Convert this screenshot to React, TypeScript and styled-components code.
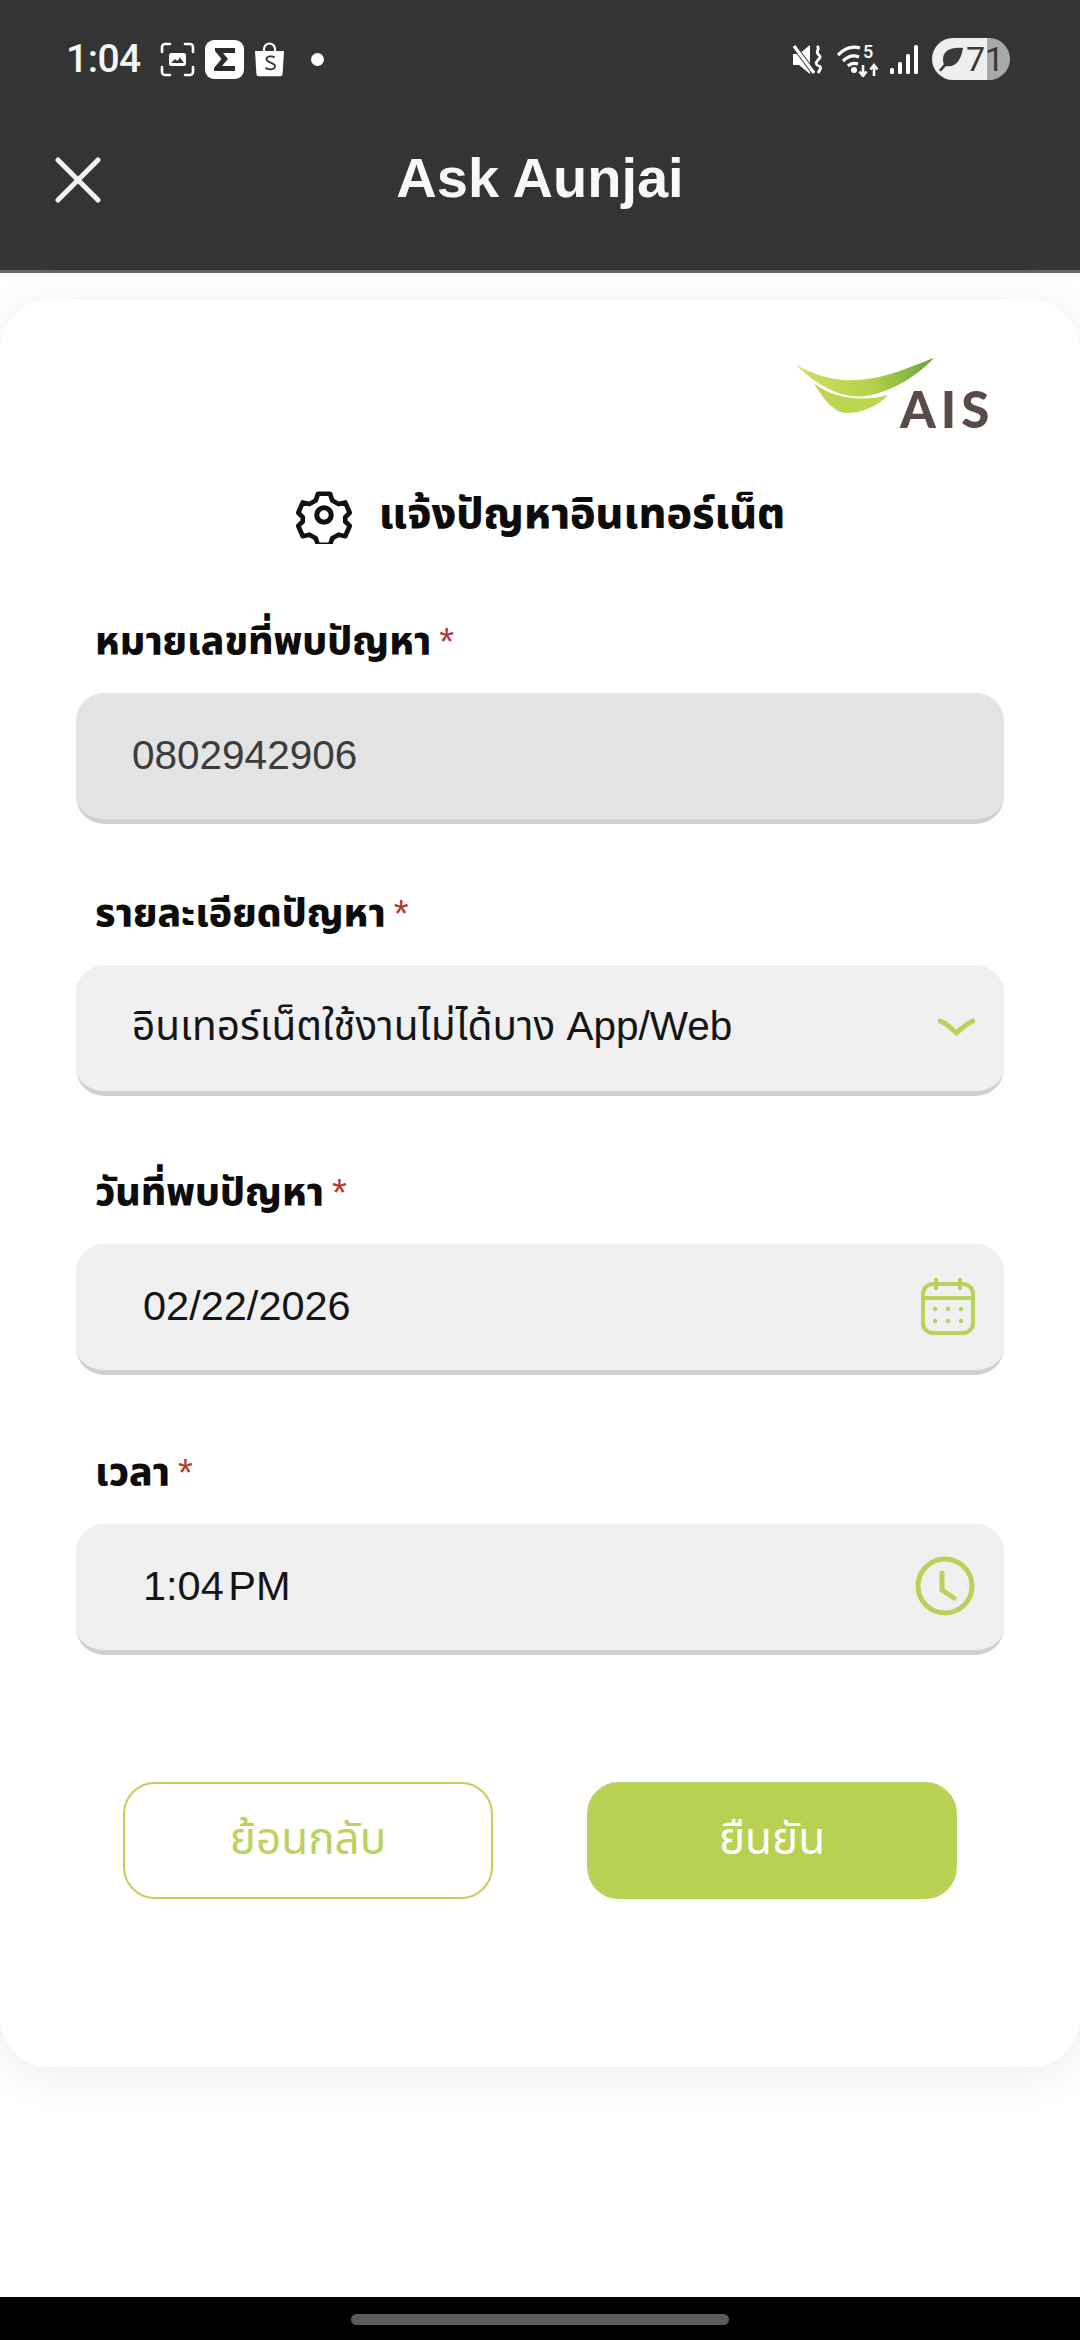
import React from "react";
import styled, { createGlobalStyle } from "styled-components";

const Global = createGlobalStyle`
  html, body { margin: 0; padding: 0; background: #fff; }
  * { box-sizing: border-box; }
  body { font-family: "Liberation Sans", "Noto Sans Thai", "Noto Sans", sans-serif; }
`;

const Page = styled.div`
  width: 1080px;
  height: 2340px;
  display: flex;
  flex-direction: column;
  overflow: hidden;
  background: #fff;
`;
const Header = styled.header`
  height: 273px;
  flex: none;
  background: #343434;
  border-bottom: 3px solid #666;
  color: #fff;
`;
const StatusBar = styled.div`
  height: 118px;
  display: flex;
  align-items: center;
  padding: 0 70px 0 66px;
`;
const Clock = styled.span`
  font: 500 39px/1 Roboto, sans-serif;
  letter-spacing: -0.5px;
  color: #f6f6f6;
  margin-right: 9px;
`;
const StatusLeft = styled.div`
  display: flex;
  align-items: center;
  gap: 10px;
`;
const StatusRight = styled.div`
  margin-left: auto;
  display: flex;
  align-items: center;
  gap: 14px;
`;
const Dot = styled.i`
  width: 13px;
  height: 13px;
  border-radius: 50%;
  background: #fff;
  margin-left: 16px;
`;
const Battery = styled.div`
  width: 78px;
  height: 42px;
  border-radius: 21px;
  background: linear-gradient(to right, #efefef 70%, #a9a9a9 70%);
  display: flex;
  align-items: center;
  padding-left: 6px;
  gap: 2px;
  color: #3a3a3a;
  font: 400 34px/1 Roboto, sans-serif;
`;
const TitleRow = styled.div`
  height: 116px;
  position: relative;
  display: flex;
  align-items: center;
  justify-content: center;
`;
const Title = styled.h1`
  margin: 0 0 -4px;
  font: 700 56px/1 "Liberation Sans", sans-serif;
  color: #f8f8f8;
`;
const Close = styled.button`
  position: absolute;
  left: 55px;
  top: 39px;
  width: 46px;
  height: 46px;
  padding: 0;
  border: 0;
  background: none;
  display: block;
`;
const Body = styled.main`
  flex: 1;
  padding-top: 27px;
  min-height: 0;
`;
const Card = styled.section`
  height: 1767px;
  background: #fff;
  border-radius: 50px;
  box-shadow: 0 8px 50px rgba(0, 0, 0, 0.08);
  padding: 54px 76px 0;
`;
const LogoRow = styled.div`
  display: flex;
  justify-content: flex-end;
  padding-right: 6px;
  height: 78px;
`;
const Heading = styled.div`
  margin-top: 53px;
  height: 60px;
  display: flex;
  align-items: center;
  justify-content: center;
  gap: 26px;
  color: #0c0c0c;
  font-size: 42.7px;
  font-weight: 800;
`;
const Form = styled.div`
  margin-top: 67px;
  display: flex;
  flex-direction: column;
`;
const Group = styled.div<{ $after?: number }>`
  margin-bottom: ${(p) => p.$after ?? 0}px;
`;
const Label = styled.div`
  height: 60px;
  padding-left: 19px;
  margin-bottom: 21px;
  display: flex;
  align-items: center;
  gap: 8px;
  font-size: 39px;
  font-weight: 800;
  color: #0c0c0c;
`;
const Star = styled.span`
  color: #b13a2c;
  font-weight: 400;
  font-size: 38px;
`;
const Field = styled.div<{ $disabled?: boolean; $inset?: number; $size?: number }>`
  height: 131px;
  border-radius: 28px;
  background: ${(p) => (p.$disabled ? "#e4e4e4" : "#f0f0f1")};
  border-bottom: 5px solid #d0d0d0;
  display: flex;
  align-items: center;
  justify-content: space-between;
  padding: 0 29px 2px ${(p) => p.$inset ?? 56}px;
  font-size: ${(p) => p.$size ?? 40.5}px;
  color: ${(p) => (p.$disabled ? "#3c3c3c" : "#151515")};
`;
const TimeText = styled.span`
  word-spacing: -7px;
`;
const Actions = styled.div`
  margin-top: 127px;
  padding: 0 47px;
  display: flex;
  justify-content: space-between;
`;
const Btn = styled.button<{ $primary?: boolean }>`
  width: 370px;
  height: 117px;
  border-radius: 32px;
  border: 2px solid #bad25e;
  background: ${(p) => (p.$primary ? "#b8d153" : "#fff")};
  color: ${(p) => (p.$primary ? "#fff" : "#bad25e")};
  font-family: inherit;
  font-size: 44px;
`;
const NavBar = styled.footer`
  height: 43px;
  flex: none;
  background: #000;
  display: flex;
  justify-content: center;
  padding-top: 17px;
`;
const Pill = styled.i`
  width: 378px;
  height: 11px;
  border-radius: 6px;
  background: #5c5c5c;
`;

const green = "#b9d25a";

const App = () => (
  <Page>
    <Global />
    <Header>
      <StatusBar>
        <StatusLeft>
          <Clock>1:04</Clock>
          <svg width="35" height="35" viewBox="0 0 35 35" fill="none">
            <path d="M2 10V5a3 3 0 0 1 3-3h5M25 2h5a3 3 0 0 1 3 3v5M33 25v5a3 3 0 0 1-3 3h-5M10 33H5a3 3 0 0 1-3-3v-5" stroke="#fff" strokeWidth="2.6" strokeLinecap="round" />
            <rect x="9" y="11" width="17" height="13" rx="2.5" fill="#fff" />
            <path d="M11 21l4-4 2.5 2 2.5-3.5 4 5.5z" fill="#343434" />
          </svg>
          <svg width="39" height="39" viewBox="0 0 39 39">
            <rect width="39" height="39" rx="9" fill="#fff" />
            <path d="M10 8h20v5H18l5 6-6 7h13v5H9v-3l7.5-9L10 11z" fill="#2c2c2c" />
          </svg>
          <svg width="31" height="35" viewBox="0 0 31 35" fill="none">
            <path d="M10 9V7a5.5 5.5 0 0 1 11 0v2" stroke="#fff" strokeWidth="2.2" />
            <path d="M1 9h29l-1.4 23a2.5 2.5 0 0 1-2.5 2.3H4.900a2.5 2.5 0 0 1-2.5-2.3z" fill="#fff" />
            <path d="M20.5 15.5c-1.5-1.5-8-2.2-8 1.8 0 3.800 8.500 2.800 8.500 7 0 4-7 3.700-9.500 1.500" stroke="#343434" strokeWidth="1.8" />
          </svg>
          <Dot />
        </StatusLeft>
        <StatusRight>
          <svg width="31" height="31" viewBox="0 0 31 31" fill="none">
            <path d="M1 10h6l11-9v29L7 21H1z" fill="#fff" />
            <path d="M2 2l20 27" stroke="#343434" strokeWidth="5" />
            <path d="M2 2l20 27" stroke="#fff" strokeWidth="3.200" />
            <path d="M25 2c4 3-2 5 1 8s3 3 0 6-2 5 1 6 1 4-1 7" stroke="#fff" strokeWidth="2.800" />
          </svg>
          <svg width="45" height="36" viewBox="0 0 45 36" fill="none">
            <path d="M1 14c7-7 15-9 22-7M6 20c5-5 11-6 16-4M11 25c3-3 7-3 10-2" stroke="#fff" strokeWidth="3.200" />
            <circle cx="17" cy="29" r="3" fill="#fff" />
            <path d="M26 35V24m-3.500 6.500L26 35l3.500-4.500M37 35V24m-3.500 4.500L37 24l3.500 4.500" stroke="#fff" strokeWidth="2.600" />
            <text x="26" y="17" fontFamily="Roboto, sans-serif" fontWeight="500" fontSize="18" fill="#fff">5</text>
          </svg>
          <svg width="28" height="31" viewBox="0 0 28 31" style={{ marginLeft: -6 }}>
            <rect x="0" y="24" width="4" height="6" rx="1.500" fill="#fff" />
            <rect x="8" y="18" width="4" height="12" rx="1.500" fill="#fff" />
            <rect x="16" y="10" width="4" height="20" rx="1.500" fill="#fff" />
            <rect x="24" y="1" width="4" height="29" rx="1.500" fill="#fff" />
          </svg>
          <Battery>
            <svg width="26" height="26" viewBox="0 0 26 26">
              <path d="M25 2C12 1 5 5 5 14c0 2 .5 3 1 4L1 24l2 1.500L8 20c9 2 15-5 17-18z" fill="#3a3a3a" />
            </svg>
            71
          </Battery>
        </StatusRight>
      </StatusBar>
      <TitleRow>
        <Close aria-label="close">
          <svg width="46" height="46" viewBox="0 0 46 46">
            <path d="M3 3l40 40M43 3L3 43" stroke="#f2f2f2" strokeWidth="5" strokeLinecap="round" />
          </svg>
        </Close>
        <Title>Ask Aunjai</Title>
      </TitleRow>
    </Header>
    <Body>
      <Card>
        <LogoRow>
          <svg width="202" height="90" viewBox="0 0 202 90">
            <defs>
              <linearGradient id="sw" x1="0" x2="1" y1="0" y2="0">
                <stop offset="0" stopColor="#cfe064" />
                <stop offset="0.55" stopColor="#b5d14a" />
                <stop offset="1" stopColor="#6aa63c" />
              </linearGradient>
            </defs>
            <path d="M0 11C20 22 40 27 60 26C90 25 115 12 138 4C125 18 100 37 70 42C45 45 22 32 0 11Z" fill="url(#sw)" />
            <path d="M18 29C30 40 60 50 92 41C80 54 62 60 48 59C36 57 26 43 18 29Z" fill="#bcd64f" />
            <text x="104" y="74" fontFamily="Lato, sans-serif" fontWeight="900" fontSize="51" fill="#5a4a48" letterSpacing="5">AIS</text>
          </svg>
        </LogoRow>
        <Heading>
          <svg width="58" height="58" viewBox="0 0 24 24" fill="none" stroke="#111" strokeWidth="2.100" strokeLinejoin="round">
            <path d="M9.300 2.500h5.400l1 3 2.800 1.600 3-.7 2 4.600-2 2 0 1.900 2 2-2 4.600-3-.7-2.800 1.600-1 3H9.300l-1-3-2.800-1.600-3 .7-2-4.600 2-2v-1.900l-2-2 2-4.600 3 .7 2.800-1.600z" transform="translate(.9 .9) scale(.925)" />
            <circle cx="12" cy="12" r="3" />
          </svg>
          แจ้งปัญหาอินเทอร์เน็ต
        </Heading>
        <Form>
          <Group $after={60}>
            <Label>หมายเลขที่พบปัญหา <Star>*</Star></Label>
            <Field $disabled>0802942906</Field>
          </Group>
          <Group $after={67}>
            <Label>รายละเอียดปัญหา <Star>*</Star></Label>
            <Field>
              อินเทอร์เน็ตใช้งานไม่ได้บาง App/Web
              <svg width="37" height="18" viewBox="0 0 37 18" fill="none">
                <path d="M2 3c8 3 12 8 16.500 12C23 11 28 6 35 3" stroke={green} strokeWidth="5" strokeLinecap="round" />
              </svg>
            </Field>
          </Group>
          <Group $after={68}>
            <Label>วันที่พบปัญหา <Star>*</Star></Label>
            <Field $inset={67} $size={41.5}>
              02/22/2026
              <svg width="54" height="58" viewBox="0 0 54 58" fill="none" stroke={green} strokeWidth="4">
                <rect x="2" y="7" width="50" height="49" rx="10" />
                <path d="M2 21h50M15 1v12M39 1v12" />
                <path d="M14 32h.1M27 32h.1M40 32h.1M14 44h.1M27 44h.1M40 44h.1" strokeWidth="4.500" strokeLinecap="round" />
              </svg>
            </Field>
          </Group>
          <Group>
            <Label>เวลา <Star>*</Star></Label>
            <Field $inset={67} $size={41.5}>
              <TimeText>1:04 PM</TimeText>
              <svg width="60" height="60" viewBox="0 0 60 60" fill="none" stroke={green} strokeWidth="5">
                <circle cx="30" cy="30" r="27" />
                <path d="M27 17v17l12 8" strokeLinecap="round" strokeLinejoin="round" />
              </svg>
            </Field>
          </Group>
        </Form>
        <Actions>
          <Btn>ย้อนกลับ</Btn>
          <Btn $primary>ยืนยัน</Btn>
        </Actions>
      </Card>
    </Body>
    <NavBar>
      <Pill />
    </NavBar>
  </Page>
);

export default App;
